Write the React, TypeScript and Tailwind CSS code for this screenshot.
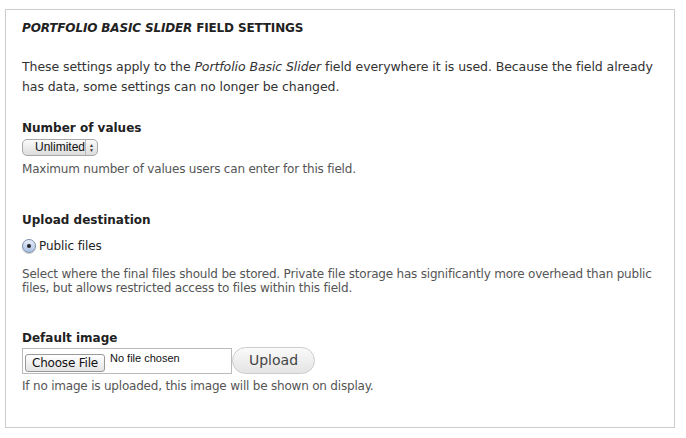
const font = { fontFamily: '"DejaVu Sans", Verdana, sans-serif' };
const arial = { fontFamily: '"Liberation Sans", Arial, sans-serif' };

export default function App() {
  return (
    <div className="w-[686px] h-[438px] bg-white pt-[9px] pl-[5px]" style={font}>
      <div className="w-[670px] h-[419px] border border-[#cccccc] px-[16px] pt-[8px] text-[#333333]">
        <h2 className="text-[12px] font-bold uppercase tracking-[-0.15px] text-[#222222] leading-[20px]">
          <em>Portfolio Basic Slider</em> field settings
        </h2>
        <p className="mt-[19px] text-[12.5px] tracking-[-0.08px] leading-[20px]">
          These settings apply to the <em>Portfolio Basic Slider</em> field everywhere it is used. Because the field already has data, some settings can no longer be changed.
        </p>

        <div className="mt-[22px]">
          <label className="block text-[12px] font-bold text-[#222222] leading-[18px]">Number of values</label>
          <div className="mt-[2px] flex h-[17px] w-[76px] items-center rounded-[5px] border border-[#a8a8a8] bg-gradient-to-b from-[#fbfbfb] to-[#dcdcdc] text-[12px] text-[#111]" style={arial}>
            <span className="flex-1 pl-[12px] leading-[15px]">Unlimited</span>
            <span className="flex h-full w-[17px] flex-col items-center justify-center border-l border-[#b8b8b8] text-[5px] leading-[5px] text-[#333]">
              <span>▲</span>
              <span>▼</span>
            </span>
          </div>
          <p className="mt-[5px] text-[12px] tracking-[-0.2px] leading-[16px] text-[#555555]">Maximum number of values users can enter for this field.</p>
        </div>

        <div className="mt-[34px]">
          <label className="block text-[12px] font-bold text-[#222222] leading-[18px]">Upload destination</label>
          <div className="mt-[8px] flex items-center gap-[3px] text-[12px] tracking-[-0.1px] text-[#222]">
            <span className="flex h-[14px] w-[14px] items-center justify-center rounded-full border border-[#7b8ca8] bg-gradient-to-b from-[#e6eef9] to-[#a9c1e3] shadow-[0_1px_1px_rgba(0,0,0,0.2)]">
              <span className="h-[4px] w-[4px] rounded-full bg-[#222]" />
            </span>
            <span>Public files</span>
          </div>
          <p className="mt-[12px] text-[12px] tracking-[-0.2px] leading-[14px] text-[#555555]">
            Select where the final files should be stored. Private file storage has significantly more overhead than public files, but allows restricted access to files within this field.
          </p>
        </div>

        <div className="mt-[34px]">
          <label className="block text-[12px] font-bold text-[#222222] leading-[18px]">Default image</label>
          <div className="flex items-center">
            <div className="flex h-[26px] w-[210px] items-end border border-[#bbbbbb] pb-[1px] pl-[2px]">
              <span className="flex h-[18px] items-center rounded-[3px] border border-[#999] bg-gradient-to-b from-[#ffffff] to-[#e4e4e4] px-[6px] text-[12px] tracking-[-0.2px] text-[#111]">Choose File</span>
              <span className="ml-[5px] self-start pt-[1px] text-[11px] text-[#111]" style={arial}>No file chosen</span>
            </div>
            <button className="h-[27px] w-[83px] rounded-full border border-[#cccccc] bg-gradient-to-b from-[#fafafa] to-[#e4e4e4] text-[14px] text-[#444]">Upload</button>
          </div>
          <p className="mt-[4px] text-[12px] tracking-[-0.2px] leading-[16px] text-[#555555]">If no image is uploaded, this image will be shown on display.</p>
        </div>
      </div>
    </div>
  );
}
